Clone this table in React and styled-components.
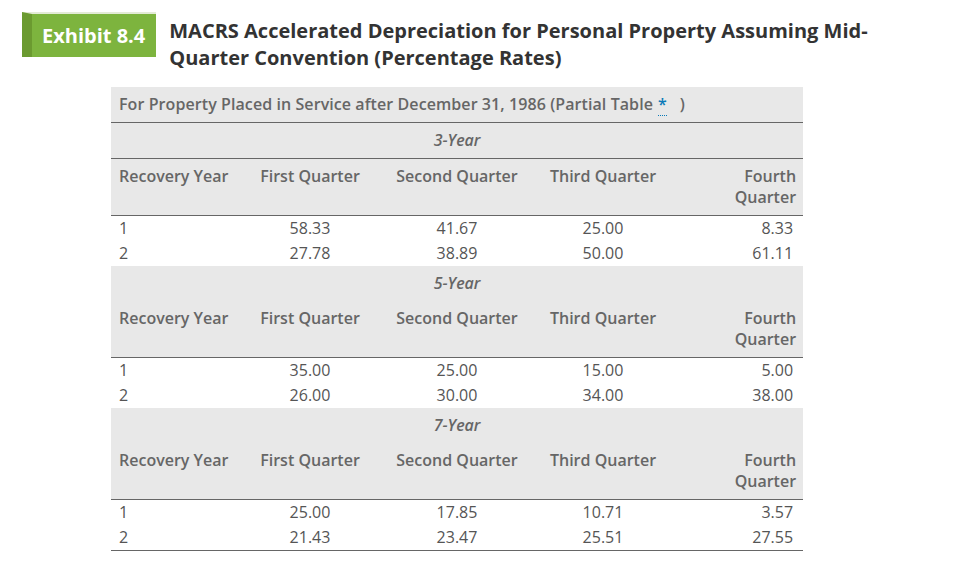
import styled, { createGlobalStyle } from "styled-components";

const GlobalStyle = createGlobalStyle`
  body {
    margin: 0;
    background: #fff;
    font-family: "Open Sans", "Liberation Sans", sans-serif;
  }
`;

const Page = styled.div`
  padding: 12px 0 0 22px;
`;

const Header = styled.div`
  display: flex;
  align-items: flex-start;
  gap: 13px;
`;

const Badge = styled.div`
  display: flex;
  align-items: center;
  box-sizing: border-box;
  height: 45px;
  padding: 0 11px 0 10px;
  border-top: 2px solid #e3ebd6;
  border-left: 10px solid #6b9a30;
  background: #7db43e;
  color: #fff;
  font-size: 20px;
  font-weight: 700;
  white-space: nowrap;
`;

const Title = styled.h2`
  margin: 5px 0 0;
  width: 700px;
  color: #333;
  font-size: 20px;
  font-weight: 700;
  line-height: 27px;
`;

const Table = styled.table`
  margin: 16px 0 0 89px;
  width: 692px;
  table-layout: fixed;
  border-collapse: collapse;
  color: #555;
  font-size: 16px;
`;

const Caption = styled.caption`
  caption-side: top;
  text-align: left;
  background: #e8e8e8;
  border-bottom: 1px solid #666;
  padding: 7px 8px 7px;
  color: #666;
  font-weight: 600;
  line-height: 21px;
  letter-spacing: 0.08px;
`;

const Note = styled.a`
  color: #0a7ab8;
  text-decoration: none;
  border-bottom: 1px dotted #0a7ab8;
  margin: 0 13px 0 5px;
`;

const GroupRow = styled.tr`
  background: #e8e8e8;
  border-bottom: ${(p) => (p.$ruled ? "1px solid #666" : "none")};
`;

const GroupCell = styled.th`
  padding: 7px 8px 7px;
  height: 21px;
  text-align: center;
  font-style: italic;
  font-weight: 600;
  color: #666;
  line-height: 21px;
`;

const HeadRow = styled.tr`
  background: #e8e8e8;
  border-bottom: 1px solid #666;
`;

const HeadCell = styled.th`
  padding: 7px 3px 7px;
  vertical-align: top;
  text-align: center;
  font-weight: 600;
  color: #666;
  line-height: 21px;

  &:first-child {
    text-align: left;
    padding-left: 8px;
  }
  &:last-child {
    text-align: right;
    padding-right: 7px;
  }
`;

const DataCell = styled.td`
  padding: 2px 8px 2px;
  line-height: 21px;
  text-align: center;
  color: #555;

  &:first-child {
    text-align: left;
  }
  &:last-child {
    text-align: right;
    padding-right: 10px;
  }
`;

const Body = styled.tbody`
  &:last-child tr:last-child {
    border-bottom: 1px solid #666;
  }
`;

const widths = [141, 116, 178, 114, 143];

const groups = [
  {
    label: "3-Year",
    rows: [
      ["1", "58.33", "41.67", "25.00", "8.33"],
      ["2", "27.78", "38.89", "50.00", "61.11"],
    ],
  },
  {
    label: "5-Year",
    rows: [
      ["1", "35.00", "25.00", "15.00", "5.00"],
      ["2", "26.00", "30.00", "34.00", "38.00"],
    ],
  },
  {
    label: "7-Year",
    rows: [
      ["1", "25.00", "17.85", "10.71", "3.57"],
      ["2", "21.43", "23.47", "25.51", "27.55"],
    ],
  },
];

function HeaderCells() {
  return (
    <HeadRow>
      <HeadCell>Recovery Year</HeadCell>
      <HeadCell>First Quarter</HeadCell>
      <HeadCell>Second Quarter</HeadCell>
      <HeadCell>Third Quarter</HeadCell>
      <HeadCell>
        Fourth
        <br />
        Quarter
      </HeadCell>
    </HeadRow>
  );
}

export default function App() {
  return (
    <Page>
      <GlobalStyle />
      <Header>
        <Badge>Exhibit 8.4</Badge>
        <Title>
          MACRS Accelerated Depreciation for Personal Property Assuming Mid-
          Quarter Convention (Percentage Rates)
        </Title>
      </Header>
      <Table>
        <Caption>
          For Property Placed in Service after December 31, 1986 (Partial Table
          <Note href="#note">*</Note>)
        </Caption>
        <colgroup>
          {widths.map((w, i) => (
            <col key={i} style={{ width: w }} />
          ))}
        </colgroup>
        {groups.map((g, i) => (
          <Body key={g.label}>
            <GroupRow $ruled={i === 0}>
              <GroupCell colSpan={5}>{g.label}</GroupCell>
            </GroupRow>
            <HeaderCells />
            {g.rows.map((r) => (
              <tr key={r[0]}>
                {r.map((v, j) => (
                  <DataCell key={j}>{v}</DataCell>
                ))}
              </tr>
            ))}
          </Body>
        ))}
      </Table>
    </Page>
  );
}
